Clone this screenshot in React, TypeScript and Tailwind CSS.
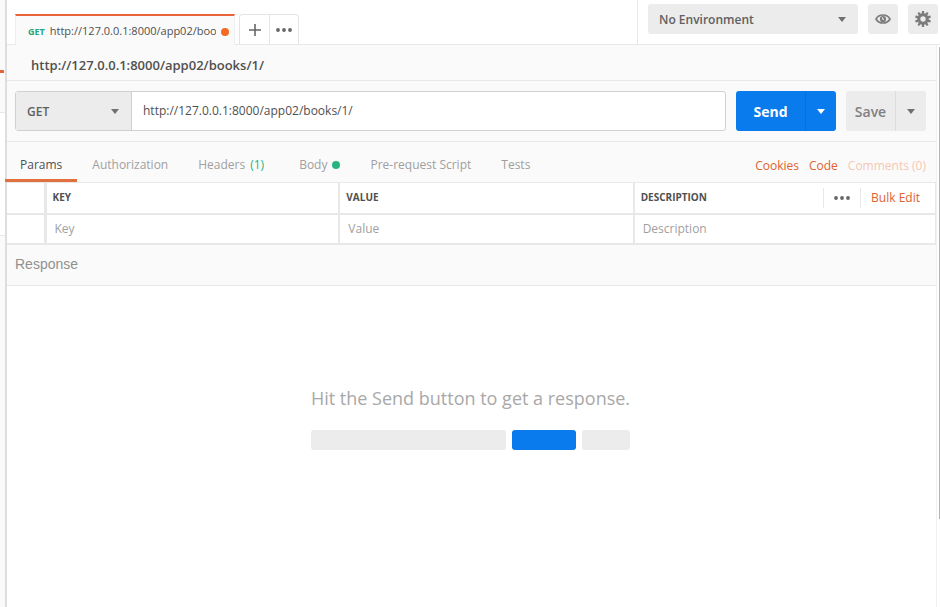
import React from "react";

function Caret({ className }: { className: string }) {
  return (
    <svg viewBox="0 0 8 5" className={className} aria-hidden="true">
      <path d="M0 0h8L4 5z" fill="currentColor" />
    </svg>
  );
}

function Dots({ className }: { className: string }) {
  return (
    <svg viewBox="0 0 16 4" className={className} aria-hidden="true" fill="currentColor">
      <circle cx="2" cy="2" r="1.9" />
      <circle cx="8" cy="2" r="1.9" />
      <circle cx="14" cy="2" r="1.9" />
    </svg>
  );
}

function EyeIcon() {
  return (
    <svg viewBox="0 0 16 10" className="h-[10px] w-4" aria-hidden="true">
      <path
        d="M1 5C2.500 2.300 5 1 8 1s5.500 1.300 7 4c-1.500 2.700-4 4-7 4S2.500 7.700 1 5z"
        fill="none"
        stroke="#7c7c7c"
        strokeWidth="1.700"
      />
      <circle cx="8" cy="5" r="3.100" fill="#7c7c7c" />
      <path d="M7.600 3.300v2h1.500" stroke="#ececec" strokeWidth="1" fill="none" />
    </svg>
  );
}

const teeth = [0, 36, 72, 108, 144, 180, 216, 252, 288, 324];

function GearIcon() {
  return (
    <svg viewBox="0 0 16 16" className="size-4" aria-hidden="true">
      <circle cx="8" cy="8" r="4.200" fill="none" stroke="#7c7c7c" strokeWidth="3" />
      {teeth.map((angle) => (
        <path key={angle} d="M6.600 3L7 0h2l.4 3z" fill="#7c7c7c" transform={`rotate(${angle} 8 8)`} />
      ))}
    </svg>
  );
}

const tabClass = "flex h-10 items-center border-b-[3px] pt-2";

function TopBar() {
  return (
    <header className="flex h-[45px] border-b border-[#e8e8e8] bg-white">
      <div className="flex min-w-0 flex-1 items-end pl-2">
        <button className="-mb-px flex h-[31px] w-[220px] items-center gap-[5px] border-x border-t-2 border-x-[#eeeeee] border-t-[#e8623a] bg-[#fafafa] pl-3 pr-[5px] pt-0.5 text-[11px]">
          <span className="text-[9px] font-bold text-[#26a47b]">GET</span>
          <span className="min-w-0 flex-1 overflow-hidden whitespace-nowrap text-left text-[#505050]">http://127.0.0.1:8000/app02/boo</span>
          <span className="size-2 rounded-full bg-[#f26b26]" />
        </button>
        <div className="ml-1 flex h-[30px] rounded-t-sm border border-b-0 border-[#e4e4e4] text-[#666666]">
          <button aria-label="New tab" className="flex w-[30px] items-center justify-center border-r border-[#e4e4e4]">
            <svg viewBox="0 0 12 12" className="size-3" aria-hidden="true">
              <path d="M6 0v12M0 6h12" stroke="currentColor" strokeWidth="1.600" />
            </svg>
          </button>
          <button aria-label="Tab options" className="flex w-7 items-center justify-center">
            <Dots className="h-1 w-4" />
          </button>
        </div>
      </div>
      <div className="flex items-start gap-[10px] border-l border-[#e8e8e8] pl-[10px] pr-[2px] pt-1">
        <div className="relative">
          <select aria-label="Environment" className="h-[30px] w-[210px] appearance-none rounded-[3px] bg-[#ececec] pl-[11px] pt-0.5 text-[12px] font-semibold text-[#606060]">
            <option>No Environment</option>
          </select>
          <Caret className="pointer-events-none absolute right-3 top-[13px] h-[5px] w-2 text-[#707070]" />
        </div>
        <button aria-label="Environment quick look" className="flex size-[30px] items-center justify-center rounded-[3px] bg-[#ececec]">
          <EyeIcon />
        </button>
        <button aria-label="Settings" className="flex size-[30px] items-center justify-center rounded-[3px] bg-[#ececec]">
          <GearIcon />
        </button>
      </div>
    </header>
  );
}

function RequestBar() {
  return (
    <div className="flex border-b border-[#e8e8e8] py-[10px] pl-2 pr-[10px]">
      <div className="flex h-10 min-w-0 flex-1 rounded-[3px] border border-[#d0d0d0] bg-white">
        <div className="relative border-r border-[#d0d0d0] bg-[#ececec]">
          <select aria-label="Method" className="h-full w-[115px] appearance-none pl-[11px] pt-0.5 text-[12px] font-semibold text-[#606060]">
            <option>GET</option>
          </select>
          <Caret className="pointer-events-none absolute right-3 top-[17px] h-[5px] w-2 text-[#707070]" />
        </div>
        <input
          aria-label="Request URL"
          defaultValue="http://127.0.0.1:8000/app02/books/1/"
          className="min-w-0 flex-1 px-[11px] text-[12px] text-[#505050] outline-none"
        />
      </div>
      <div className="ml-[10px] flex h-10 w-[100px] overflow-hidden rounded-[3px] bg-[#097bed] text-white">
        <button className="flex-1 text-[14px] font-bold">Send</button>
        <button aria-label="Send options" className="flex w-[31px] items-center justify-center border-l border-[#0a6fd6] pr-px">
          <Caret className="h-[5px] w-2" />
        </button>
      </div>
      <div className="ml-[10px] flex h-10 w-20 overflow-hidden rounded-[3px] bg-[#ececec] text-[#808080]">
        <button className="flex-1 text-[14px] font-semibold">Save</button>
        <button aria-label="Save options" className="flex w-[31px] items-center justify-center border-l border-[#dcdcdc] pr-px">
          <Caret className="h-[5px] w-2 text-[#707070]" />
        </button>
      </div>
    </div>
  );
}

function RequestTabs() {
  return (
    <div className="flex justify-between text-[12px]">
      <nav className="-ml-[2px] flex text-[#a0a0a0]">
        <button className={`${tabClass} border-[#e2703c] px-[15px] text-[#505050]`}>Params</button>
        <button className={`${tabClass} border-transparent px-[15px]`}>Authorization</button>
        <button className={`${tabClass} gap-[5px] border-transparent pl-[15px] pr-5`}>
          Headers <span className="text-[#26b47f]">(1)</span>
        </button>
        <button className={`${tabClass} gap-[5px] border-transparent px-[15px]`}>
          Body <span className="size-2 rounded-full bg-[#26b47f]" />
        </button>
        <button className={`${tabClass} border-transparent px-[15px]`}>Pre-request Script</button>
        <button className={`${tabClass} border-transparent px-[15px]`}>Tests</button>
      </nav>
      <div className="flex items-center gap-[10px] pr-[10px] pt-2 text-[#e0622f]">
        <a href="#cookies">Cookies</a>
        <a href="#code">Code</a>
        <a href="#comments" className="text-[#f6c8b4]">Comments (0)</a>
      </div>
    </div>
  );
}

const fieldClass = "block w-full bg-transparent px-2 text-[12px] outline-none placeholder:text-[#a0a0a0]";

function ParamsTable() {
  return (
    <table className="w-full table-fixed border-collapse bg-white text-left text-[#505050]">
      <colgroup>
        <col className="w-[38px]" />
        <col className="w-[31.7%]" />
        <col className="w-[31.7%]" />
        <col />
      </colgroup>
      <thead className="text-[10px]">
        <tr className="h-[31px] border-b-2 border-t border-[#e8e8e8]">
          <th className="border-r-[3px] border-[#e8e8e8]" />
          <th className="border-r-2 border-[#e8e8e8] px-[6px] font-bold">KEY</th>
          <th className="border-r-2 border-[#e8e8e8] px-[6px] font-bold">VALUE</th>
          <th className="border-r border-[#e8e8e8] p-0 pl-[6px] font-bold">
            <div className="flex items-center justify-between">
              DESCRIPTION
              <div className="flex h-5 items-center">
                <button aria-label="Column options" className="flex h-full w-[37px] items-center justify-center border-l border-[#e8e8e8] text-[#666666]">
                  <Dots className="h-1 w-4" />
                </button>
                <button className="h-full border-l border-[#e8e8e8] pl-[10px] pr-[15px] text-[12px] font-normal text-[#e0622f]">Bulk Edit</button>
              </div>
            </div>
          </th>
        </tr>
      </thead>
      <tbody>
        <tr className="h-[30px] border-b-2 border-[#e8e8e8]">
          <td className="border-r-[3px] border-[#e8e8e8]" />
          <td className="border-r-2 border-[#e8e8e8] p-0"><input aria-label="Key" placeholder="Key" className={fieldClass} /></td>
          <td className="border-r-2 border-[#e8e8e8] p-0"><input aria-label="Value" placeholder="Value" className={fieldClass} /></td>
          <td className="border-r border-[#e8e8e8] p-0"><input aria-label="Description" placeholder="Description" className={fieldClass} /></td>
        </tr>
      </tbody>
    </table>
  );
}

function EmptyResponse() {
  return (
    <section className="flex flex-1 flex-col items-center bg-white pr-[2px] pt-[98px]">
      <div>
        <p className="text-[18px] leading-7 text-[#a8a8a8]">Hit the Send button to get a response.</p>
        <div className="mt-[18px] flex h-5 gap-[6px]">
          <div className="flex-1 rounded-[3px] bg-[#ececec]" />
          <div className="w-16 rounded-[3px] bg-[#097bed]" />
          <div className="w-12 rounded-[3px] bg-[#ececec]" />
        </div>
      </div>
    </section>
  );
}

export default function App() {
  return (
    <div className="flex min-h-screen bg-white font-['Open_Sans','Noto_Sans',sans-serif]">
      <aside className="w-[7px] shrink-0 border-r-2 border-[#dedede] bg-[#fafafa]">
        <div className="h-[70px]" />
        <div className="h-[3px] w-1 bg-[#e8623a]" />
        <div className="h-10 border-b border-[#e8e8e8]" />
        <div className="h-[123px] border-b border-[#e8e8e8] bg-white" />
      </aside>
      <div className="flex min-w-0 flex-1 flex-col">
        <TopBar />
        <div className="flex flex-1">
          <main className="flex min-w-0 flex-1 flex-col bg-[#fafafa]">
            <h1 className="flex h-9 items-center border-b border-[#e8e8e8] pl-6 pt-1.5 text-[13px] font-semibold text-[#505050]">
              http://127.0.0.1:8000/app02/books/1/
            </h1>
            <RequestBar />
            <RequestTabs />
            <ParamsTable />
            <h2 className="flex h-[41px] items-center border-b border-[#e8e8e8] pl-2 font-['Liberation_Sans',sans-serif] text-[14px] text-[#909090]">
              Response
            </h2>
            <EmptyResponse />
          </main>
          <div className="flex w-1 justify-end border-l border-[#f0f0f0] bg-white pt-[2px]">
            <div className="h-[472px] w-px bg-[#b4b4b4]" />
          </div>
        </div>
      </div>
    </div>
  );
}
